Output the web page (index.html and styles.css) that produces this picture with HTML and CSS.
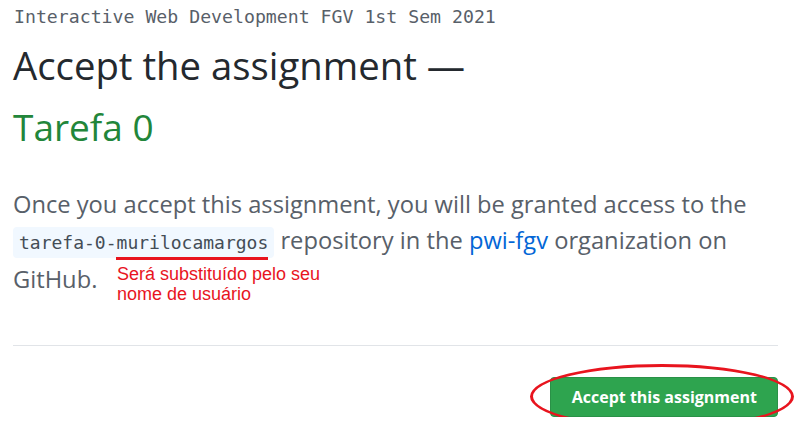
FILE: index.html
```html
<!DOCTYPE html>
<html>
<head>
<meta charset="utf-8">
<link rel="stylesheet" href="styles.css">
</head>
<body>
<main class="page">
  <div class="classroom">Interactive Web Development FGV 1st Sem 2021</div>
  <h1 class="title">Accept the assignment —</h1>
  <h2 class="assignment">Tarefa 0</h2>
  <p class="lead">Once you accept this assignment, you will be granted access to the <span class="repo"><code class="code">tarefa-0-<span class="user">murilocamargos</span></code><span class="note">Será substituído pelo seu<br>nome de usuário</span></span> repository in the <a class="link" href="#">pwi-fgv</a> organization on GitHub.</p>
  <hr class="divider">
  <div class="actions">
    <button class="btn">Accept this assignment</button>
    <span class="ring"></span>
  </div>
</main>
</body>
</html>
```
FILE: styles.css
```css
html, body { margin: 0; padding: 0; background: #fff; }
.page { padding: 4px 22px 0 13px; font-family: "Open Sans", "Noto Sans", sans-serif; }
.classroom { font-family: "DejaVu Sans Mono", monospace; font-size: 18.2px; color: #586069; line-height: 26px; padding-left: 1px; }
.title { font-size: 38.3px; font-weight: 400; color: #24292e; margin: 8px 0 0; line-height: 54px; }
.assignment { font-size: 37px; font-weight: 400; color: #22863a; margin: 8px 0 0; line-height: 54px; }
.lead { font-size: 23.7px; color: #586069; line-height: 36px; margin: 32px 0 0; }
.repo { position: relative; }
.code { font-family: "DejaVu Sans Mono", monospace; font-size: 18px; background: #f1f8ff; border-radius: 4px; padding: 5px 6px; color: #444d56; }
.user { position: relative; }
.user::after { content: ""; position: absolute; left: -1px; right: 0; bottom: -7px; height: 3px; background: #e8141e; }
.note { position: absolute; left: 104px; top: 40px; white-space: nowrap; font-family: "Liberation Sans", Arial, sans-serif; font-size: 18px; line-height: 20px; color: #e8141e; }
.link { color: #0366d6; text-decoration: none; }
.divider { border: 0; border-top: 1px solid #e1e4e8; margin: 48px 0 0; }
.actions { position: relative; display: flex; justify-content: flex-end; padding-top: 31px; }
.btn { background: #2ea44f; color: #fff; border: 1px solid #2a9147; border-radius: 4px; font-family: "Open Sans", sans-serif; font-weight: 700; font-size: 16px; height: 40px; padding: 0 20px 0 21px; }
.ring { position: absolute; right: -16px; top: 18px; width: 258px; height: 59px; border: 3px solid #e8141e; border-radius: 50%; }
```
